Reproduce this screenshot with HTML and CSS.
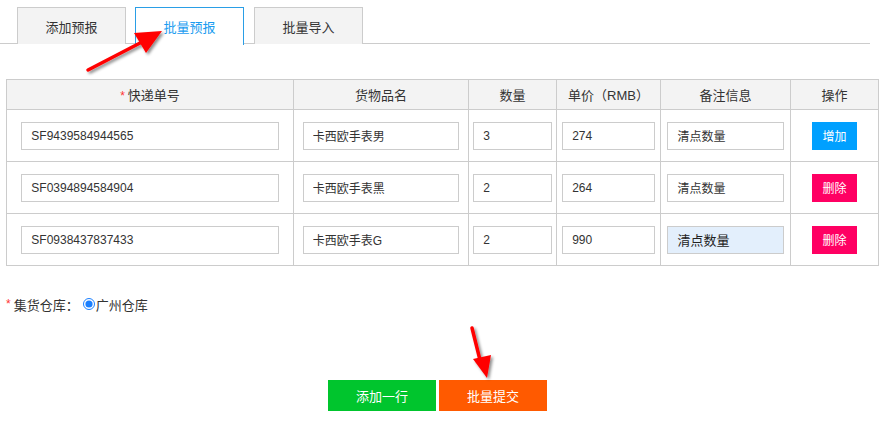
FILE: index.html
```html
<!DOCTYPE html>
<html lang="zh-CN">
<head>
    <meta charset="UTF-8">
    <title>批量预报</title>
    <link rel="stylesheet" href="styles.css">
</head>
<body>
    <div class="tabs">
        <div class="tab">添加预报</div>
        <div class="tab active">批量预报</div>
        <div class="tab">批量导入</div>
    </div>

    <table class="batch">
        <thead>
            <tr>
                <th class="c1"><span class="req">*</span>快递单号</th>
                <th class="c2">货物品名</th>
                <th class="c3">数量</th>
                <th class="c4">单价（RMB）</th>
                <th class="c5">备注信息</th>
                <th class="c6">操作</th>
            </tr>
        </thead>
        <tbody>
            <tr>
                <td><input type="text" value="SF9439584944565"></td>
                <td><input type="text" value="卡西欧手表男"></td>
                <td><input type="text" value="3"></td>
                <td><input type="text" value="274"></td>
                <td><input type="text" value="清点数量"></td>
                <td><button type="button" class="btn-add">增加</button></td>
            </tr>
            <tr>
                <td><input type="text" value="SF0394894584904"></td>
                <td><input type="text" value="卡西欧手表黑"></td>
                <td><input type="text" value="2"></td>
                <td><input type="text" value="264"></td>
                <td><input type="text" value="清点数量"></td>
                <td><button type="button" class="btn-del">删除</button></td>
            </tr>
            <tr>
                <td><input type="text" value="SF0938437837433"></td>
                <td><input type="text" value="卡西欧手表G"></td>
                <td><input type="text" value="2"></td>
                <td><input type="text" value="990"></td>
                <td><input type="text" class="focused" value="清点数量"></td>
                <td><button type="button" class="btn-del">删除</button></td>
            </tr>
        </tbody>
    </table>

    <div class="warehouse">
        <span class="req">*</span>集货仓库：
        <label class="radio"><input type="radio" name="wh" checked>广州仓库</label>
    </div>

    <div class="actions">
        <button type="button" class="btn-row">添加一行</button>
        <button type="button" class="btn-submit">批量提交</button>
    </div>

    <!-- annotation arrows -->
    <svg class="arrow arrow-tab" width="100" height="60" viewBox="0 0 100 60">
        <defs>
            <filter id="sh1" x="-30%" y="-30%" width="160%" height="160%">
                <feDropShadow dx="2" dy="2" stdDeviation="1.5" flood-color="#000" flood-opacity="0.45"/>
            </filter>
        </defs>
        <g filter="url(#sh1)" fill="#f00">
            <line x1="8" y1="50" x2="62" y2="22" stroke="#f00" stroke-width="3.5" stroke-linecap="round"/>
            <polygon points="82,11 54,13 66,33"/>
        </g>
    </svg>
    <svg class="arrow arrow-submit" width="40" height="70" viewBox="0 0 40 70">
        <defs>
            <filter id="sh2" x="-50%" y="-30%" width="200%" height="160%">
                <feDropShadow dx="2" dy="2" stdDeviation="1.5" flood-color="#000" flood-opacity="0.45"/>
            </filter>
        </defs>
        <g filter="url(#sh2)" fill="#f00">
            <line x1="7" y1="4" x2="16" y2="40" stroke="#f00" stroke-width="3.5" stroke-linecap="round"/>
            <polygon points="22,54 8,35 26,31"/>
        </g>
    </svg>
</body>
</html>
```

FILE: styles.css
```css
body {
    margin: 0;
    padding: 0;
    font-family: "Microsoft YaHei", "Liberation Sans", "Noto Sans CJK SC", sans-serif;
    font-size: 12px;
    color: #333;
    background-color: white;
    position: relative;
    width: 887px;
    height: 444px;
    overflow: hidden;
}

.tabs {
    display: flex;
    width: 853px;
    padding: 7px 0 0 17px;
    border-bottom: 1px solid #ccc;
    height: 36px;
}

.tab {
    box-sizing: border-box;
    width: 109px;
    height: 37px;
    margin-right: 9px;
    border: 1px solid #ccc;
    border-bottom: none;
    background-color: #f3f3f3;
    display: flex;
    align-items: center;
    justify-content: center;
    font-size: 13px;
    color: #333;
}

.tab.active {
    background-color: white;
    color: #1a9cf0;
    border-color: #2a9ee6;
    height: 38px;
    margin-right: 10px;
}

.batch {
    margin: 35px 0 0 6px;
    width: 873px;
    border-collapse: collapse;
    table-layout: fixed;
}

.batch th,
.batch td {
    border: 1px solid #ccc;
    text-align: center;
    padding: 0;
}

.batch th {
    background-color: #f3f3f3;
    height: 29px;
    font-weight: normal;
    font-size: 13px;
    color: #333;
}

.batch td {
    height: 51px;
}

.c1 { width: 286px; }
.c2 { width: 174px; }
.c3 { width: 87px; }
.c4 { width: 103px; }
.c5 { width: 129px; }

.batch input[type="text"] {
    box-sizing: border-box;
    width: 90%;
    height: 28px;
    margin: 0 auto;
    display: block;
    border: 1px solid #ccc;
    padding: 0 0 0 9px;
    font-family: inherit;
    font-size: 12px;
    color: #333;
    outline: none;
}

.batch input.focused {
    background-color: #e3effc;
    font-size: 13px;
    color: #222;
}

.req {
    color: #f33;
    font-size: 12px;
    margin-right: 3px;
}

.batch button {
    width: 45px;
    height: 28px;
    border: none;
    color: white;
    font-family: inherit;
    font-size: 12px;
    cursor: pointer;
    padding: 0;
}

.btn-add {
    background-color: #00a0ff;
}

.btn-del {
    background-color: #ff0063;
}

.warehouse {
    margin: 29px 0 0 6px;
    font-size: 13px;
    display: flex;
    align-items: center;
    height: 18px;
}

.radio {
    display: flex;
    align-items: center;
    margin-left: 4px;
}

.radio input {
    width: 12px;
    height: 12px;
    margin: 0 1px 0 0;
    accent-color: #1a7fff;
}

.actions {
    display: flex;
    justify-content: center;
    gap: 3px;
    margin-top: 67px;
    padding-right: 12px;
}

.actions button {
    width: 108px;
    height: 31px;
    border: none;
    color: white;
    font-family: inherit;
    font-size: 13px;
    cursor: pointer;
}

.btn-row {
    background-color: #00c52d;
}

.btn-submit {
    background-color: #ff5a00;
}

.arrow {
    position: absolute;
}

.arrow-tab {
    left: 80px;
    top: 20px;
}

.arrow-submit {
    left: 465px;
    top: 324px;
}
```
